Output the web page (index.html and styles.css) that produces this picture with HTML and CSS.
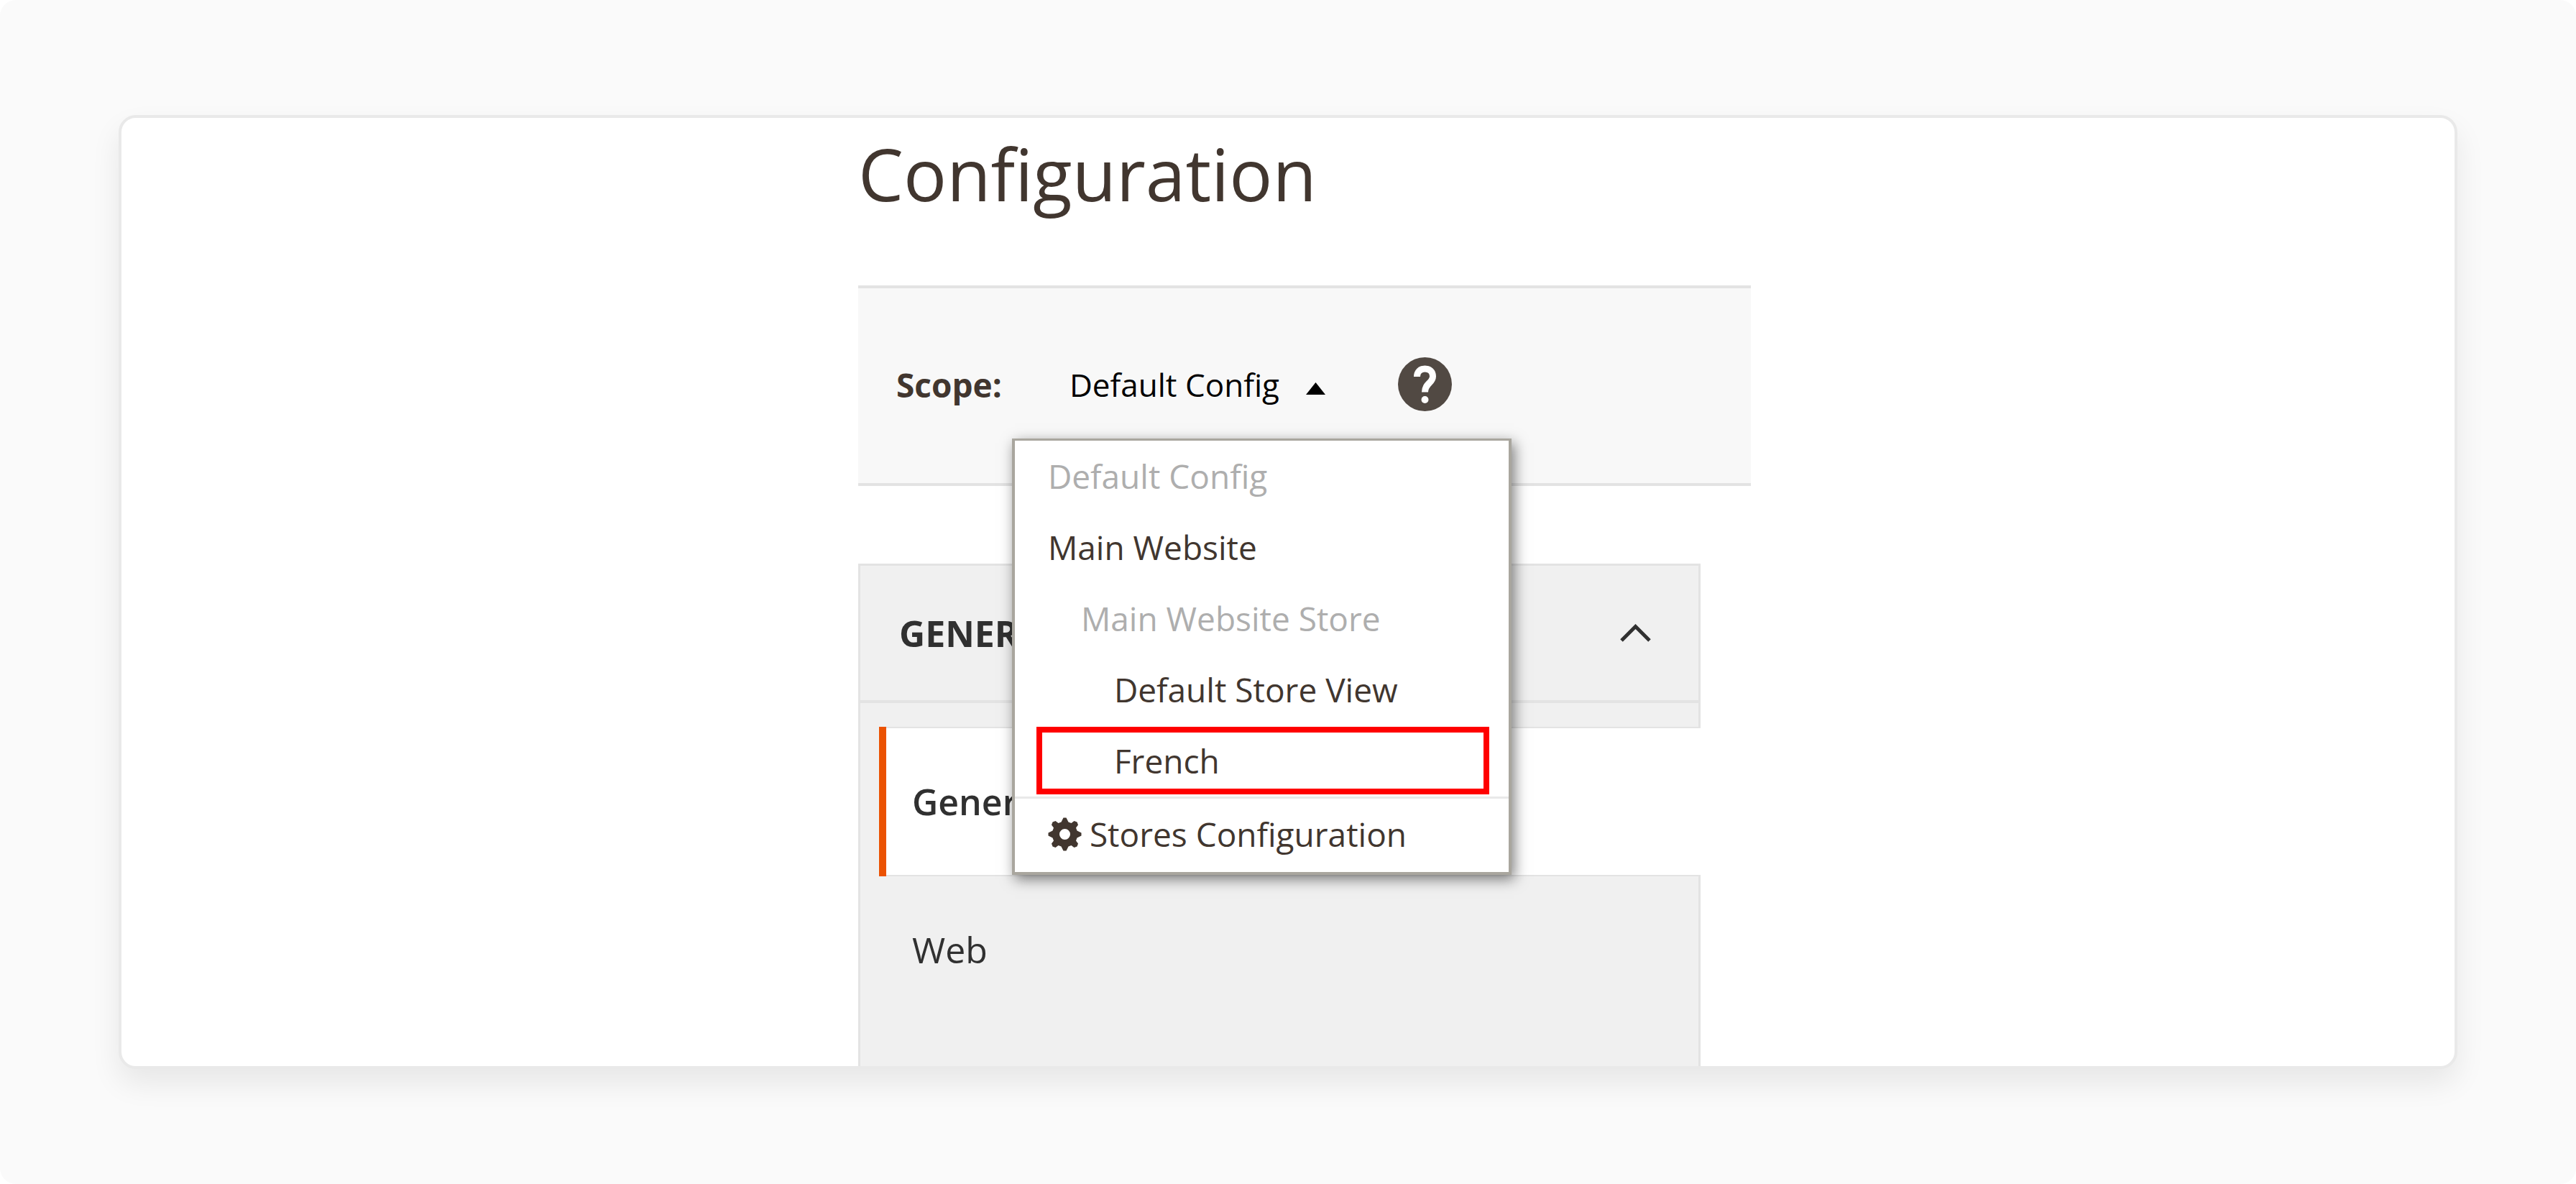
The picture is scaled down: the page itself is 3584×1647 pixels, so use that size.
FILE: index.html
```html
<!DOCTYPE html>
<html lang="en">
  <head>
    <meta charset="utf-8">
    <title>Configuration</title>
    <link rel="stylesheet" href="styles.css">
  </head>
  <body>
    <div class="page">
      <div class="card">
        <main class="content">
          <h1 class="title">Configuration</h1>

          <div class="scope-bar">
            <label class="scope-label" for="scope">Scope:</label>
            <div class="scope-switcher">
              <button class="scope-toggle" id="scope" type="button" aria-expanded="true">
                Default Config
                <svg class="caret" viewBox="0 0 27 17"><path d="M13.5 0L27 17H0z"/></svg>
              </button>
              <ul class="menu">
                <li class="menu-item disabled">Default Config</li>
                <li class="menu-item"><a href="#">Main Website</a></li>
                <li class="menu-item level-1 disabled">Main Website Store</li>
                <li class="menu-item level-2"><a href="#">Default Store View</a></li>
                <li class="menu-item level-2 highlighted"><a href="#">French</a></li>
                <li class="menu-item stores">
                  <a href="#">
                    <svg class="gear" viewBox="-23.5 -23.5 47 47">
                      <path fill-rule="evenodd" d="M-2 -23L2 -23L5 -17L9 -15.5L13 -18.5L17 -17L18.5 -13L15.5 -9L17 -5L23 -2V2L17 5L15.5 9L18.5 13L17 17L13 18.5L9 15.5L5 17L2 23H-2L-5 17L-9 15.5L-13 18.5L-17 17L-18.5 13L-15.5 9L-17 5L-23 2V-2L-17 -5L-15.5 -9L-18.5 -13L-17 -17L-13 -18.5L-9 -15.5L-5 -17zM7.5 0A7.5 7.5 0 1 0 -7.5 0A7.5 7.5 0 1 0 7.5 0z"/>
                    </svg>
                    Stores Configuration
                  </a>
                </li>
              </ul>
            </div>
            <a class="help" href="#" aria-label="Help">
              <svg viewBox="0 0 75 75">
                <circle cx="37.5" cy="37.5" r="37.5" fill="#514943"/>
                <path d="M26.5 27C26.5 20 31 16 37.5 16S48.5 20 48.5 26.500C48.5 36 37.5 36 37.5 48.5" fill="none" stroke="#fff" stroke-width="9"/>
                <circle cx="37.5" cy="59" r="5" fill="#fff"/>
              </svg>
            </a>
          </div>

          <nav class="config-nav">
            <button class="nav-title" type="button" aria-expanded="true">
              GENERAL
              <svg class="chevron" viewBox="0 0 43 25"><path d="M2 23L21.500 3.500L41 23"/></svg>
            </button>
            <ul class="nav-items">
              <li><a class="nav-link active" href="#">General</a></li>
              <li><a class="nav-link" href="#">Web</a></li>
            </ul>
          </nav>
        </main>
      </div>
    </div>
  </body>
</html>
```
FILE: styles.css
```css
* { margin: 0; padding: 0; box-sizing: border-box; }

body {
  background: #fff;
  color: #41362f;
  font-family: "Open Sans", "Noto Sans", sans-serif;
  font-size: 46px;
  line-height: 64px;
}

a { color: inherit; text-decoration: none; }
ul { list-style: none; }
svg { display: block; }
button { border: 0; background: none; font: inherit; cursor: pointer; }

/* outer frame */
.page {
  display: flex;
  min-height: 100vh;
  padding: 160px 165px;
  border-radius: 22px;
  background: #fafafa;
}

.card {
  display: grid;
  flex: 1;
  grid-template-columns: 1025fr 1242fr 979fr;
  border: 4px solid #e9e9e9;
  border-radius: 24px;
  background: #fff;
  box-shadow: 0 20px 40px rgba(0, 0, 0, 0.08);
}

.content {
  display: flex;
  flex-direction: column;
  grid-column: 2;
}

.title {
  margin: 9px 0 88px;
  font-size: 100px;
  font-weight: 400;
  line-height: 136px;
}

/* scope switcher */
.scope-bar {
  display: flex;
  align-items: center;
  padding: 96px 53px 100px;
  border: solid #e3e3e3;
  border-width: 4px 0;
  background: #f8f8f8;
}

.scope-label { margin-right: 14px; font-weight: 700; }

.scope-switcher { position: relative; padding-left: 80px; }

.scope-toggle {
  display: flex;
  align-items: center;
  gap: 37px;
  color: #000;
  font-size: 44px;
}

.caret { width: 27px; height: 17px; margin-top: 12px; }

.help { width: 75px; margin-left: 101px; }

.menu {
  position: absolute;
  top: 107px;
  left: 0;
  z-index: 1;
  width: 695px;
  padding-bottom: 3px;
  border: solid #a9a69e;
  border-width: 3px 4px 4px;
  background: #fff;
  box-shadow: 4px 6px 18px rgba(0, 0, 0, 0.5);
}

.menu-item {
  position: relative;
  height: 99px;
  padding-left: 46px;
  line-height: 99px;
}
.menu-item a { display: block; }

.level-1 { padding-left: 92px; }
.level-2 { padding-left: 138px; }
.disabled { color: #aeaeae; }

.highlighted::after {
  content: "";
  position: absolute;
  inset: 2px 27px 3px 30px;
  border: 8px solid #f00;
  pointer-events: none;
}

.stores { height: 102px; border-top: 3px solid #e9e9e9; }
.stores a { display: flex; align-items: center; gap: 11px; }

.gear { width: 47px; height: 47px; fill: #41362f; }

/* section navigation */
.config-nav {
  flex: 1;
  margin: 108px 70px 0 0;
  border: 3px solid #e3e3e3;
  border-bottom: 0;
  background: #f0f0f0;
  color: #303030;
  font-size: 50px;
}

.nav-title {
  display: flex;
  align-items: center;
  justify-content: space-between;
  width: 100%;
  height: 191px;
  padding: 0 66px 0 54px;
  border-bottom: 4px solid #e3e3e3;
  color: #303030;
  font-weight: 700;
}

.chevron {
  width: 43px;
  height: 25px;
  fill: none;
  stroke: #303030;
  stroke-width: 5;
}

.nav-items { padding-top: 33px; }

.nav-link {
  display: block;
  padding: 70px 72px;
}

.nav-link.active {
  margin: 0 -3px 0 26px;
  padding: 72px 36px;
  border-left: 10px solid #eb5202;
  background: #fff;
  box-shadow: inset 0 2px #e3e3e3, inset 0 -2px #e3e3e3;
  font-weight: 600;
}
```
